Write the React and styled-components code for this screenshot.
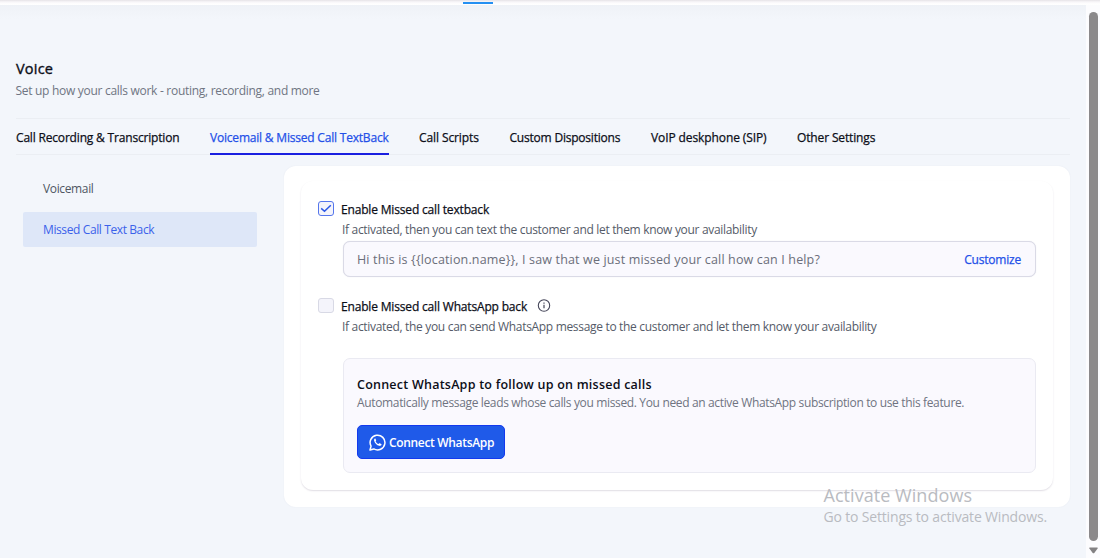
import styled, { createGlobalStyle, css } from 'styled-components'

const GlobalStyle = createGlobalStyle`
  * { box-sizing: border-box; }
  body {
    margin: 0;
    overflow: hidden;
    font-family: 'Open Sans', 'Noto Sans', sans-serif;
    font-size: 12px;
    color: #0c0e18;
    background: #f3f6fb;
  }
`

// slightly heavier than regular
const medium = css`
  -webkit-text-stroke: 0.25px currentColor;
`

const Page = styled.div`
  height: 558px;
  display: flex;
  flex-direction: column;
  overflow: hidden;
`

const TopBar = styled.div`
  flex: none;
  height: 5px;
  padding: 2px 0 0 463px;
  background: linear-gradient(#e4e1e5 0, #f1eff2 1px, #fdfcfd 3px, #fff 5px);
`

const TopBarMarker = styled.div`
  width: 30px;
  height: 2px;
  background: #2590f2;
`

const Body = styled.div`
  flex: 1;
  min-height: 0;
  display: flex;
`

const Main = styled.main`
  flex: 1;
  padding: 54px 16px 0 15px;
  background: linear-gradient(#eff2f7 0, #f3f6fb 14px);
`

const Title = styled.h1`
  margin: 0 0 0 1px;
  font-size: 14.5px;
  line-height: 20px;
  font-weight: 400;
  letter-spacing: 0.2px;
  -webkit-text-stroke: 0.35px currentColor;
`

const Subtitle = styled.p`
  margin: 2px 0 17px 0.5px;
  line-height: 20px;
  letter-spacing: -0.29px;
  color: #6f7582;
`

const Tabs = styled.nav`
  display: flex;
  gap: 30px;
  height: 37px;
  margin-left: 1px;
  border-top: 1px solid #ebeef3;
  border-bottom: 1px solid #ebeef3;
`

const Tab = styled.a`
  flex: none;
  width: ${({ $width }) => $width}px;
  height: 36px;
  line-height: 37px;
  white-space: nowrap;
  letter-spacing: ${({ $tracking }) => $tracking}px;
  color: ${({ $active }) => ($active ? '#2350e8' : '#0c0e18')};
  border-bottom: 2px solid ${({ $active }) => ($active ? '#1a1fe0' : 'transparent')};
  ${medium}
`

const Columns = styled.div`
  display: flex;
  align-items: flex-start;
  gap: 27px;
  margin-top: 11px;
`

const SideNav = styled.aside`
  width: 234px;
  margin: 5px 0 0 8px;
  display: grid;
  gap: 6px;
`

const SideItem = styled.a`
  height: 35px;
  padding-left: 20px;
  line-height: 36px;
  border-radius: 2px;
  letter-spacing: ${({ $tracking }) => $tracking}px;
  color: ${({ $active }) => ($active ? '#3b62ea' : '#4f5663')};
  background: ${({ $active }) => ($active ? '#dee7f8' : 'transparent')};
`

const Card = styled.section`
  flex: 1;
  height: 341px;
  padding: 15px 17px;
  background: #fff;
  border-radius: 12px;
  box-shadow: 0 0 2px rgba(60, 60, 100, 0.06);
`

const Inner = styled.div`
  height: 309px;
  padding: 20px 17px 0;
  border-radius: 12px;
  box-shadow: 0 1px 1.5px rgba(70, 55, 95, 0.17);
`

const Setting = styled.div`
  display: grid;
  grid-template-columns: 16px 1fr;
  column-gap: 7px;
  margin-top: ${({ $top }) => $top || 0}px;
`

const Checkbox = styled.span`
  display: flex;
  align-items: center;
  justify-content: center;
  width: 16px;
  height: 15px;
  border: 1px solid ${({ $checked }) => ($checked ? '#5576ec' : '#d8d9e5')};
  border-radius: 3px;
  background: #f4f4fb;
`

const Label = styled.div`
  display: flex;
  align-items: center;
  gap: 10px;
  height: 16px;
  line-height: 17px;
  white-space: nowrap;
  letter-spacing: -0.17px;
  ${medium}
`

const Hint = styled.p`
  grid-column: 2;
  margin: 4px 0 0 1px;
  line-height: 18px;
  white-space: nowrap;
  letter-spacing: -0.317px;
  color: #555b68;
`

const Field = styled.div`
  display: flex;
  align-items: center;
  justify-content: space-between;
  height: 36px;
  margin: 2px 0 0 25px;
  padding: 0 14px 0 13px;
  border: 1px solid #dadae6;
  border-radius: 7px;
  background: #faf9fe;
  box-shadow: 0 0 1px #dadae6;
`

const Message = styled.span`
  font-size: 12.5px;
  letter-spacing: 0.15px;
  color: #6b6e7a;
`

const Customize = styled.a`
  letter-spacing: -0.2px;
  color: #2350e8;
  ${medium}
`

const ConnectBox = styled.div`
  height: 115px;
  margin: 22px 0 0 25px;
  padding: 17px 13px 0;
  border: 1px solid #eaeaf2;
  border-radius: 7px;
  background: #faf9fe;
`

const ConnectTitle = styled.h2`
  margin: 0;
  font-size: 12.5px;
  font-weight: 600;
  line-height: 18px;
  letter-spacing: 0.235px;
`

const ConnectText = styled.p`
  margin: 0 0 13px;
  line-height: 18px;
  white-space: nowrap;
  letter-spacing: -0.348px;
  color: #6f7481;
`

const ConnectButton = styled.button`
  display: flex;
  align-items: center;
  gap: 3px;
  width: 148px;
  height: 34px;
  padding: 0 0 0 11px;
  border: 1px solid #1339ee;
  border-radius: 5px;
  background: #1f5ae9;
  color: #fff;
  font: 600 12px 'Open Sans', 'Noto Sans', sans-serif;
  letter-spacing: -0.33px;
  white-space: nowrap;
`

const Scrollbar = styled.div`
  flex: none;
  width: 14px;
  padding: 7px 2px 0 3px;
  display: flex;
  flex-direction: column;
  align-items: center;
  gap: 6px;
  background: #fcfcfe;
`

const Thumb = styled.div`
  width: 9px;
  height: 529px;
  border-radius: 5px;
  background: #8b898b;
`

const Watermark = styled.div`
  position: absolute;
  left: 823.5px;
  top: 484px;
  color: #b9bbc1;
  white-space: nowrap;
`

const WatermarkTitle = styled.div`
  font-size: 18px;
  line-height: 22px;
  letter-spacing: 0.05px;
`

const WatermarkText = styled.div`
  font-size: 14px;
  line-height: 22px;
  letter-spacing: -0.17px;
`

const tabs = [
  { label: 'Call Recording & Transcription', width: 164, tracking: -0.18 },
  { label: 'Voicemail & Missed Call TextBack', width: 179, tracking: -0.2, active: true },
  { label: 'Call Scripts', width: 60.5, tracking: -0.1 },
  { label: 'Custom Dispositions', width: 111.5, tracking: -0.21 },
  { label: 'VoIP deskphone (SIP)', width: 116, tracking: -0.1 },
  { label: 'Other Settings', width: 79, tracking: -0.14 },
]

function CheckIcon() {
  return (
    <svg width="12" height="11" viewBox="0 0 12 11" fill="none">
      <path d="M1.2 5.400 4.500 8.300 10.800 2.300" stroke="#2b57e6" strokeWidth="1.500" />
    </svg>
  )
}

function InfoIcon() {
  return (
    <svg width="14" height="14" viewBox="0 0 14 14" fill="none" stroke="#454659">
      <circle cx="7" cy="6.5" r="5.7" strokeWidth="1.1" />
      <path d="M7 5.800v3.500M7 3.600v1.200" strokeWidth="1.2" />
    </svg>
  )
}

function WhatsAppIcon() {
  return (
    <svg width="17" height="17" viewBox="0 0 17 17" fill="none">
      <path
        d="M1 16l1.05-3.85A7.4 7.4 0 1 1 4.8 14.95z"
        stroke="#fff"
        strokeWidth="1.5"
        strokeLinejoin="round"
      />
      <path
        d="M5.9 4.5c-.8.5-1 1.4-.7 2.4.8 2.4 2.6 4.2 5 4.9 1.1.3 2-.2 2.3-1.1.1-.4 0-.6-.3-.7l-1.5-.7c-.3-.1-.5 0-.7.2l-.5.6c-1.2-.4-2.3-1.4-2.9-2.6l.5-.7c.1-.2.1-.3 0-.5l-.6-1.500c-.1-.3-.3-.4-.6-.3z"
        fill="#fff"
      />
    </svg>
  )
}

export default function App() {
  return (
    <Page>
      <GlobalStyle />
      <TopBar>
        <TopBarMarker />
      </TopBar>
      <Body>
        <Main>
          <Title>Voice</Title>
          <Subtitle>Set up how your calls work - routing, recording, and more</Subtitle>
          <Tabs>
            {tabs.map((tab) => (
              <Tab key={tab.label} $width={tab.width} $tracking={tab.tracking} $active={tab.active}>
                {tab.label}
              </Tab>
            ))}
          </Tabs>
          <Columns>
            <SideNav>
              <SideItem $tracking={-0.36}>Voicemail</SideItem>
              <SideItem $tracking={-0.39} $active>Missed Call Text Back</SideItem>
            </SideNav>
            <Card>
              <Inner>
                <Setting>
                  <Checkbox $checked role="checkbox" aria-checked="true">
                    <CheckIcon />
                  </Checkbox>
                  <Label>Enable Missed call textback</Label>
                  <Hint>
                    If activated, then you can text the customer and let them know your availability
                  </Hint>
                </Setting>
                <Field>
                  <Message>
                    {'Hi this is {{location.name}}, I saw that we just missed your call how can I help?'}
                  </Message>
                  <Customize>Customize</Customize>
                </Field>
                <Setting $top={21}>
                  <Checkbox role="checkbox" aria-checked="false" />
                  <Label>
                    Enable Missed call WhatsApp back
                    <InfoIcon />
                  </Label>
                  <Hint>
                    If activated, the you can send WhatsApp message to the customer and let them know your availability
                  </Hint>
                </Setting>
                <ConnectBox>
                  <ConnectTitle>Connect WhatsApp to follow up on missed calls</ConnectTitle>
                  <ConnectText>
                    Automatically message leads whose calls you missed. You need an active WhatsApp subscription to use this feature.
                  </ConnectText>
                  <ConnectButton type="button">
                    <WhatsAppIcon />
                    Connect WhatsApp
                  </ConnectButton>
                </ConnectBox>
              </Inner>
            </Card>
          </Columns>
        </Main>
        <Scrollbar>
          <Thumb />
          <svg width="9" height="7" viewBox="0 0 9 7">
            <path d="M.8.5h7.4q.8.2.4.9L5.300 5.900q-.8.9-1.600 0L.4 1.400Q0 .7.800.5z" fill="#838183" />
          </svg>
        </Scrollbar>
      </Body>
      <Watermark>
        <WatermarkTitle>Activate Windows</WatermarkTitle>
        <WatermarkText>Go to Settings to activate Windows.</WatermarkText>
      </Watermark>
    </Page>
  )
}
